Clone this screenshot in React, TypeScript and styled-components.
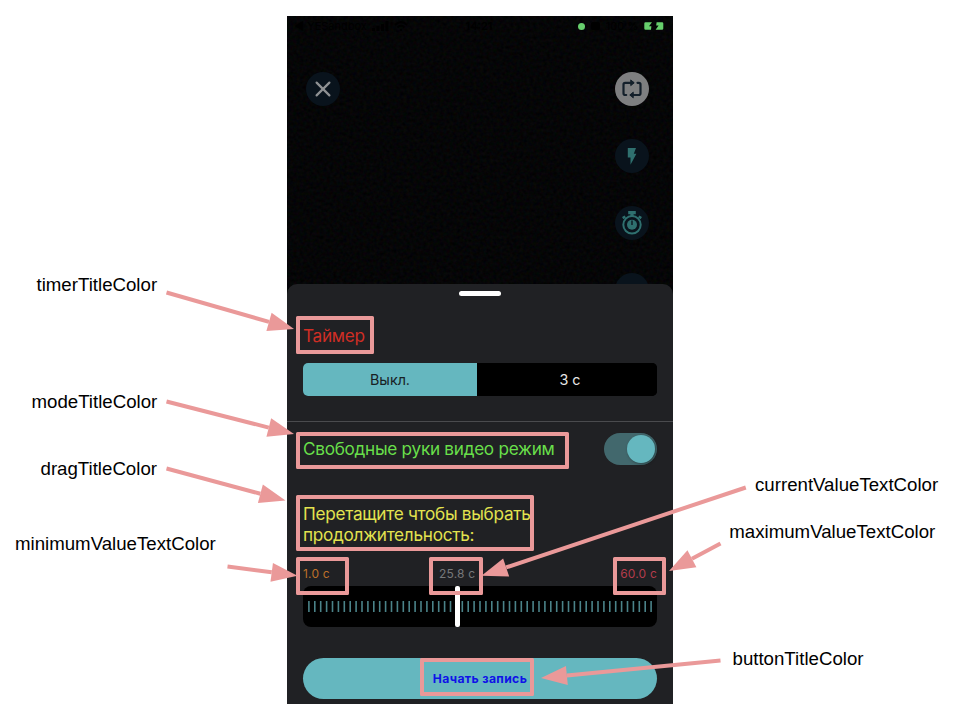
import React from "react";
import styled, { createGlobalStyle } from "styled-components";

const PINK = "#ea9999";
const TEAL = "#65b7bf";

const GlobalStyle = createGlobalStyle`
  * { box-sizing: border-box; }
  html, body { margin: 0; padding: 0; background: #fff; }
`;

const Page = styled.main`
  position: relative;
  width: 960px;
  height: 720px;
  padding: 16px 287px;
  overflow: hidden;
  background: #fff;
  font-family: Inter, "Noto Sans", sans-serif;
`;

const Phone = styled.section`
  display: flex;
  flex-direction: column;
  width: 386px;
  height: 688px;
  overflow: hidden;
  background: #050607;
`;

const Camera = styled.div`
  position: relative;
  display: flex;
  flex-direction: column;
  height: 268px;
  flex: none;
`;

const Grain = styled.svg`
  position: absolute;
  top: 0;
  left: 0;
  width: 386px;
  height: 280px;
`;

const StatusBar = styled.div`
  position: relative;
  display: grid;
  grid-template-columns: 1fr auto 1fr;
  align-items: center;
  height: 20px;
  padding: 0 9px 0 7px;
  color: #000;
  font-size: 11px;
  line-height: 20px;
`;

const StatusGroup = styled.div<{ $end?: boolean }>`
  display: flex;
  align-items: center;
  justify-content: ${(p) => (p.$end ? "flex-end" : "flex-start")};
  gap: ${(p) => (p.$end ? "6px" : "5px")};
`;

const StatusTime = styled.span`
  font-weight: 600;
`;

const Dot = styled.i`
  width: 7px;
  height: 7px;
  border-radius: 50%;
  background: #67cf6c;
`;

const LockBadge = styled.i`
  width: 9px;
  height: 8px;
  border-radius: 2px;
  background: #000;
`;

const Controls = styled.div`
  position: relative;
  display: flex;
  justify-content: space-between;
  padding: 36px 24px 0 19px;
`;

const Tools = styled.div`
  display: flex;
  flex-direction: column;
  gap: 33px;
`;

const RoundButton = styled.button<{ $light?: boolean }>`
  display: flex;
  align-items: center;
  justify-content: center;
  flex: none;
  width: 34px;
  height: 34px;
  padding: 0;
  border: 0;
  border-radius: 50%;
  background: ${(p) => (p.$light ? "#7e7f80" : "#09131c")};
`;

const Sheet = styled.div`
  position: relative;
  display: flex;
  flex-direction: column;
  flex: 1;
  border-radius: 10px 10px 0 0;
  background: #202124;
`;

const Handle = styled.div`
  align-self: center;
  width: 42px;
  height: 5px;
  margin-top: 7px;
  border-radius: 3px;
  background: #fff;
`;

const Title = styled.h2<{ $color: string }>`
  margin: 0;
  color: ${(p) => p.$color};
  font-size: 17.2px;
  font-weight: 400;
  line-height: 21px;
  letter-spacing: -0.29px;
  white-space: nowrap;
`;

const TimerSection = styled.div`
  display: flex;
  flex-direction: column;
  gap: 17px;
  height: 126px;
  padding: 29px 16px 0;
  border-bottom: 1px solid #4a4b4e;
`;

const Segments = styled.div`
  display: flex;
  height: 33px;
  border-radius: 5px;
  overflow: hidden;
  background: #000;
`;

const Segment = styled.button<{ $active?: boolean }>`
  width: ${(p) => (p.$active ? "174px" : "180px")};
  padding: 0 0 0 ${(p) => (p.$active ? "0" : "6px")};
  border: 0;
  background: ${(p) => (p.$active ? TEAL : "#000")};
  color: ${(p) => (p.$active ? "#182124" : "#e6e6e6")};
  font: 400 14.3px/33px Inter, sans-serif;
`;

const ModeRow = styled.div`
  display: flex;
  align-items: center;
  justify-content: space-between;
  height: 54px;
  padding: 0 16px;

  ${Title} {
    padding-bottom: 2px;
  }
`;

const Toggle = styled.button`
  display: flex;
  align-items: center;
  justify-content: flex-end;
  width: 53px;
  height: 32px;
  padding: 0 2px;
  border: 0;
  border-radius: 16px;
  background: #42686d;
`;

const Knob = styled.i`
  width: 28px;
  height: 28px;
  border-radius: 50%;
  background: ${TEAL};
  box-shadow: 1px 1px 3px rgba(0, 0, 0, 0.35);
`;

const DurationSection = styled.div`
  display: flex;
  flex-direction: column;
  padding: 27px 16px 0;
`;

const Values = styled.div`
  display: grid;
  grid-template-columns: 136px 1fr auto;
  height: 41px;
  padding-top: 20px;
  font-size: 12px;
  line-height: 18px;
  letter-spacing: 0.2px;
`;

const Value = styled.span<{ $color: string }>`
  color: ${(p) => p.$color};
  white-space: nowrap;
`;

const Slider = styled.div`
  position: relative;
  display: flex;
  align-items: center;
  height: 41px;
  border-radius: 8px;
  background: #000;
`;

const Thumb = styled.i`
  position: absolute;
  left: 152px;
  top: 0;
  width: 5px;
  height: 41px;
  border-radius: 2px;
  background: #fff;
`;

const RecordButton = styled.button`
  height: 41px;
  margin: 31px 16px 0;
  padding: 0;
  border: 0;
  border-radius: 21px;
  background: ${TEAL};
  color: #0f12e8;
  font: 700 12.2px/41px Inter, sans-serif;
  letter-spacing: 0.35px;
`;

const Frame = styled.div<{ $x: number; $y: number; $w: number; $h: number }>`
  position: absolute;
  left: ${(p) => p.$x}px;
  top: ${(p) => p.$y}px;
  width: ${(p) => p.$w}px;
  height: ${(p) => p.$h}px;
  border: 4px solid ${PINK};
  border-radius: 1.5px;
`;

const Arrows = styled.svg`
  position: absolute;
  top: 0;
  left: 0;
  pointer-events: none;
`;

const Label = styled.span<{ $x: number; $y: number }>`
  position: absolute;
  left: ${(p) => p.$x}px;
  top: ${(p) => p.$y}px;
  color: #000;
  font: 400 18.67px/22px "Liberation Sans", Arial, sans-serif;
  white-space: nowrap;
`;

const frames = [
  [296, 316, 78, 38],
  [296, 432, 273, 37],
  [296, 495, 238, 56],
  [296, 557, 53, 38],
  [429, 557, 54, 38],
  [613, 557, 53, 38],
  [420, 658, 114, 38],
];

const arrows = [
  [166.5, 292.5, 294, 329],
  [166.5, 401.5, 294, 434],
  [166.5, 468.5, 285.5, 500.5],
  [227.5, 566.5, 297.5, 575.7],
  [745.8, 487.5, 481.5, 575.7],
  [720.5, 543.5, 669, 571],
  [720.5, 660.5, 541, 678],
];

const labels: [string, number, number][] = [
  ["timerTitleColor", 36.5, 274],
  ["modeTitleColor", 31.5, 391],
  ["dragTitleColor", 40.5, 458],
  ["minimumValueTextColor", 15, 533],
  ["currentValueTextColor", 755, 474],
  ["maximumValueTextColor", 729.3, 521],
  ["buttonTitleColor", 732.5, 648],
];

function Arrow({ points: [x1, y1, x2, y2] }: { points: number[] }) {
  const len = Math.hypot(x2 - x1, y2 - y1);
  const ux = (x2 - x1) / len;
  const uy = (y2 - y1) / len;
  const bx = x2 - ux * 26;
  const by = y2 - uy * 26;
  const w = 9.5;
  return (
    <g>
      <line x1={x1} y1={y1} x2={bx} y2={by} stroke={PINK} strokeWidth="4" />
      <polygon
        fill={PINK}
        points={`${x2},${y2} ${bx - uy * w},${by + ux * w} ${bx + uy * w},${by - ux * w}`}
      />
    </g>
  );
}

function Ticks() {
  return (
    <svg width="354" height="11" viewBox="0 0 354 11" stroke="#4b8389" strokeWidth="1.6">
      {Array.from({ length: 59 }, (_, i) => {
        const x = 5.9 + i * 5.9;
        return <line key={i} x1={x} x2={x} y1="0" y2="11" />;
      })}
    </svg>
  );
}

function CloseIcon() {
  return (
    <svg width="16" height="16" viewBox="0 0 16 16" stroke="#8f9193" strokeWidth="2.2" strokeLinecap="round">
      <path d="M1.6 1.6 14.4 14.4M14.4 1.6 1.6 14.4" />
    </svg>
  );
}

function RepeatIcon() {
  return (
    <svg width="20" height="20" viewBox="0 0 20 20" fill="none" stroke="#14202b" strokeWidth="2.2" strokeLinecap="round" strokeLinejoin="round">
      <path d="M4.2 16H3.2Q1.5 16 1.5 14.3V5.5Q1.5 3.8 3.2 3.8H11M15.5 3.8H16.8Q18.5 3.8 18.5 5.5V14.3Q18.5 16 16.8 16H9" />
      <path d="M9 1.2 12.2 3.8 9 6.4ZM11 13.4 7.8 16 11 18.6Z" fill="#14202b" strokeWidth="1" />
    </svg>
  );
}

function FlashIcon() {
  return (
    <svg width="10" height="17" viewBox="0 0 10 17">
      <path d="M.8 0H9L6.8 5.7H9.4L3.5 16.8V9.5H.8Z" fill="#2f706f" />
    </svg>
  );
}

function StopwatchIcon() {
  return (
    <svg width="22" height="24" viewBox="0 0 22 24" fill="none" stroke="#2f706f">
      <path d="M7.2 1.7H14.8M11 1.7V5" strokeWidth="3.2" />
      <path d="M1.7 7.1 4.3 5.5M20.3 7.1 17.7 5.5" strokeWidth="2.5" />
      <circle cx="11" cy="13.8" r="8.7" strokeWidth="2" />
      <circle cx="11" cy="13.8" r="5" fill="#2f706f" stroke="none" />
      <path d="M11 9.5V14" stroke="#08121b" strokeWidth="1.3" />
    </svg>
  );
}

function BatteryIcon() {
  return (
    <svg width="20" height="8" viewBox="0 0 20 8">
      <path d="M1.5.2H8L5 4.3H7.4L7 7.8H1.5Q.3 7.8.3 6.5V1.5Q.3.2 1.5.2Z" fill="#67cf6c" />
      <path d="M12.6.2H18Q19.3.2 19.3 1.5V6.5Q19.3 7.8 18 7.8H11.6L14.6 3.6H12.2Z" fill="#67cf6c" />
    </svg>
  );
}

function SignalIcon() {
  return (
    <svg width="17" height="10" viewBox="0 0 17 10">
      <path d="M0 7h3v3H0ZM4.5 5h3v5h-3ZM9 3h3v7H9ZM13.5 0h3v10h-3Z" />
    </svg>
  );
}

function WifiIcon() {
  return (
    <svg width="14" height="10" viewBox="0 0 14 10" fill="none" stroke="#000" strokeWidth="1.8">
      <path d="M1 4Q7-2 13 4M3.5 6.5Q7 3 10.5 6.5M6 9H8" />
    </svg>
  );
}

export default function App() {
  return (
    <>
      <GlobalStyle />
      <Page>
        <Phone>
          <Camera>
            <Grain aria-hidden="true">
              <filter id="grain" x="0" y="0" width="100%" height="100%" colorInterpolationFilters="sRGB">
                <feTurbulence type="fractalNoise" baseFrequency="0.3" numOctaves="2" seed="4" />
                <feColorMatrix values=".07 0 0 0 -.015  0 .06 0 0 -.009  0 0 .07 0 -.010  0 0 0 0 1" />
              </filter>
              <rect width="386" height="280" filter="url(#grain)" />
            </Grain>
            <StatusBar>
              <StatusGroup>
                <span>◀ YESandbox</span>
                <SignalIcon />
                <WifiIcon />
              </StatusGroup>
              <StatusTime>14:21</StatusTime>
              <StatusGroup $end>
                <Dot />
                <LockBadge />
                <span>100 %</span>
                <BatteryIcon />
              </StatusGroup>
            </StatusBar>
            <Controls>
              <RoundButton aria-label="Закрыть"><CloseIcon /></RoundButton>
              <Tools>
                <RoundButton $light><RepeatIcon /></RoundButton>
                <RoundButton><FlashIcon /></RoundButton>
                <RoundButton><StopwatchIcon /></RoundButton>
                <RoundButton />
              </Tools>
            </Controls>
          </Camera>
          <Sheet>
            <Handle />
            <TimerSection>
              <Title $color="#cf2e25">Таймер</Title>
              <Segments>
                <Segment $active>Выкл.</Segment>
                <Segment>3 с</Segment>
              </Segments>
            </TimerSection>
            <ModeRow>
              <Title $color="#68df4a">Свободные руки видео режим</Title>
              <Toggle aria-label="Режим"><Knob /></Toggle>
            </ModeRow>
            <DurationSection>
              <Title $color="#e3e34f">
                Перетащите чтобы выбрать
                <br />
                продолжительность:
              </Title>
              <Values>
                <Value $color="#bd7029">1.0 с</Value>
                <Value $color="#77787a">25.8 с</Value>
                <Value $color="#b43c4c">60.0 с</Value>
              </Values>
              <Slider>
                <Ticks />
                <Thumb />
              </Slider>
            </DurationSection>
            <RecordButton>Начать запись</RecordButton>
          </Sheet>
        </Phone>
        {frames.map(([x, y, w, h]) => (
          <Frame key={`${x}-${y}`} $x={x} $y={y} $w={w} $h={h} />
        ))}
        <Arrows width="960" height="720">
          {arrows.map((points, i) => <Arrow key={i} points={points} />)}
        </Arrows>
        {labels.map(([text, x, y]) => (
          <Label key={text} $x={x} $y={y}>{text}</Label>
        ))}
      </Page>
    </>
  );
}
